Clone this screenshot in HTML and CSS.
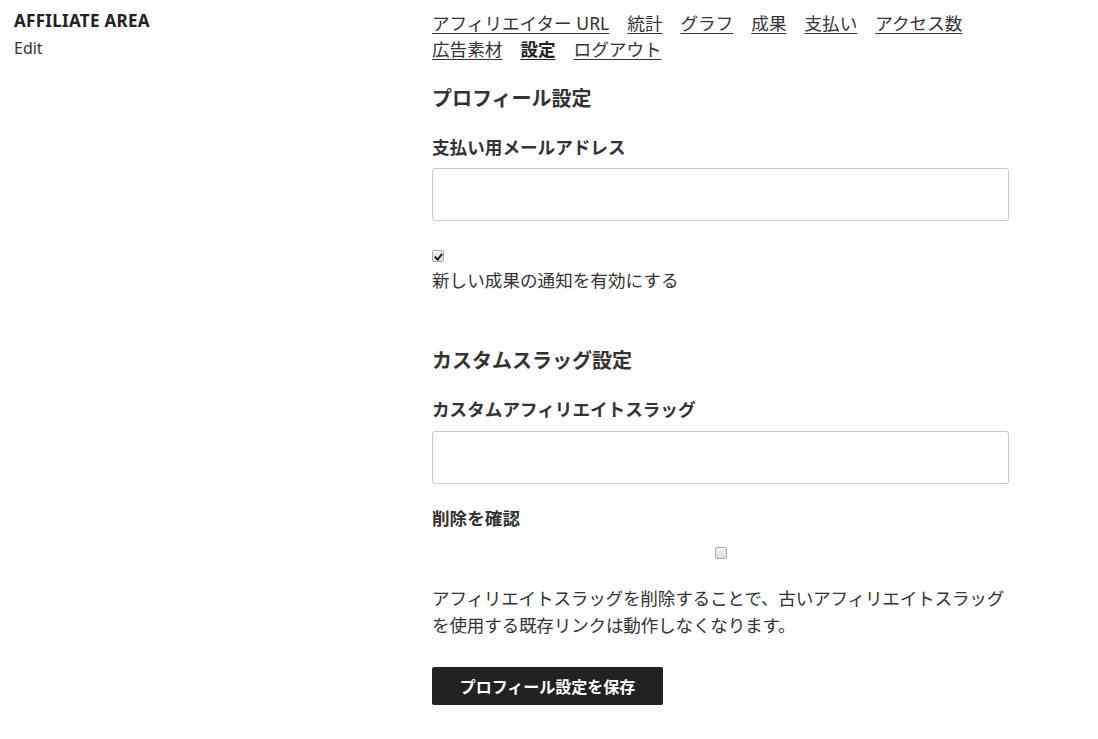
FILE: index.html
```
<!DOCTYPE html>
<html lang="ja">
<head>
  <meta charset="UTF-8" />
  <meta name="viewport" content="width=device-width, initial-scale=1.0"/>
  <title>Affiliate Area</title>
  <link rel="stylesheet" href="styles.css">
</head>
<body>

<div class="page">
  <aside class="sidebar">
    <h1 class="area-title">AFFILIATE AREA</h1>
    <a class="edit-link" href="#">Edit</a>
  </aside>

  <main class="content">
    <nav class="tabs">
      <a href="#">アフィリエイター URL</a>
      <a href="#">統計</a>
      <a href="#">グラフ</a>
      <a href="#">成果</a>
      <a href="#">支払い</a>
      <a href="#">アクセス数</a>
      <a href="#">広告素材</a>
      <a href="#" class="active">設定</a>
      <a href="#">ログアウト</a>
    </nav>

    <form class="settings">
      <h3 class="section-title first">プロフィール設定</h3>

      <label class="field-label" for="payEmail">支払い用メールアドレス</label>
      <input type="email" id="payEmail" class="text-input" />

      <input type="checkbox" id="notify" class="check" checked />
      <label for="notify" class="check-text">新しい成果の通知を有効にする</label>

      <h3 class="section-title second">カスタムスラッグ設定</h3>

      <label class="field-label" for="slug">カスタムアフィリエイトスラッグ</label>
      <input type="text" id="slug" class="text-input slug-input" />

      <label class="field-label delete-label" for="confirmDelete">削除を確認</label>
      <div class="center-check">
        <input type="checkbox" id="confirmDelete" class="check" />
      </div>

      <p class="note">アフィリエイトスラッグを削除することで、古いアフィリエイトスラッグを使用する既存リンクは動作しなくなります。</p>

      <button type="button" class="save-btn">プロフィール設定を保存</button>
    </form>
  </main>
</div>

</body>
</html>
```

FILE: styles.css
```
body {
  margin: 0;
  font-family: "Noto Sans", "Noto Sans CJK JP", sans-serif;
  color: #333;
  background: #fff;
}
.page {
  display: flex;
}
.sidebar {
  flex: 0 0 418px;
  padding: 10px 0 0 14px;
}
.area-title {
  margin: 0;
  font-size: 17px;
  line-height: 22px;
  font-weight: 700;
  letter-spacing: 0.3px;
  color: #222;
}
.edit-link {
  display: block;
  margin-top: 6px;
  font-size: 16px;
  line-height: 20px;
  color: #333;
  text-decoration: none;
}
.content {
  width: 577px;
  padding-top: 10px;
  font-size: 17.6px;
}
.tabs {
  display: flex;
  flex-wrap: wrap;
  column-gap: 18px;
  line-height: 26px;
}
.tabs a {
  color: #333;
  text-decoration: underline;
  text-underline-offset: 3px;
}
.tabs a.active {
  font-weight: 700;
  color: #222;
}
.settings {
  display: flex;
  flex-direction: column;
  align-items: flex-start;
}
.section-title {
  margin: 0;
  font-size: 20px;
  line-height: 28px;
  font-weight: 700;
}
.section-title.first {
  margin-top: 23px;
}
.section-title.second {
  margin-top: 54px;
}
.field-label {
  margin-top: 21px;
  font-weight: 700;
  line-height: 26px;
}
.text-input {
  box-sizing: border-box;
  width: 577px;
  height: 53px;
  margin-top: 8px;
  border: 1px solid #c8c8c8;
  border-radius: 3px;
  font-size: 18px;
  padding: 0 12px;
}
.slug-input {
  margin-top: 9px;
}
.check {
  appearance: none;
  box-sizing: border-box;
  width: 12px;
  height: 12px;
  margin: 29px 0 0 0;
  border: 1px solid #aaa;
  border-radius: 2px;
  background: linear-gradient(#f4f4f4, #dcdcdc);
  position: relative;
}
.check:checked::after {
  content: "";
  position: absolute;
  left: 3px;
  top: 1px;
  width: 3px;
  height: 6px;
  border: solid #222;
  border-width: 0 2px 2px 0;
  transform: rotate(40deg);
}
.check-text {
  margin-top: 5px;
  line-height: 26px;
}
.delete-label {
  margin-top: 21px;
}
.center-check {
  align-self: stretch;
  display: flex;
  justify-content: center;
}
.center-check .check {
  margin-top: 16px;
}
.note {
  width: 582px;
  margin: 26px 0 0;
  line-height: 27px;
  letter-spacing: -0.2px;
}
.save-btn {
  margin-top: 28px;
  width: 231px;
  height: 38px;
  background: #222;
  color: #fff;
  border: none;
  border-radius: 2px;
  font-family: inherit;
  font-size: 16px;
  font-weight: 700;
  cursor: pointer;
}
```
